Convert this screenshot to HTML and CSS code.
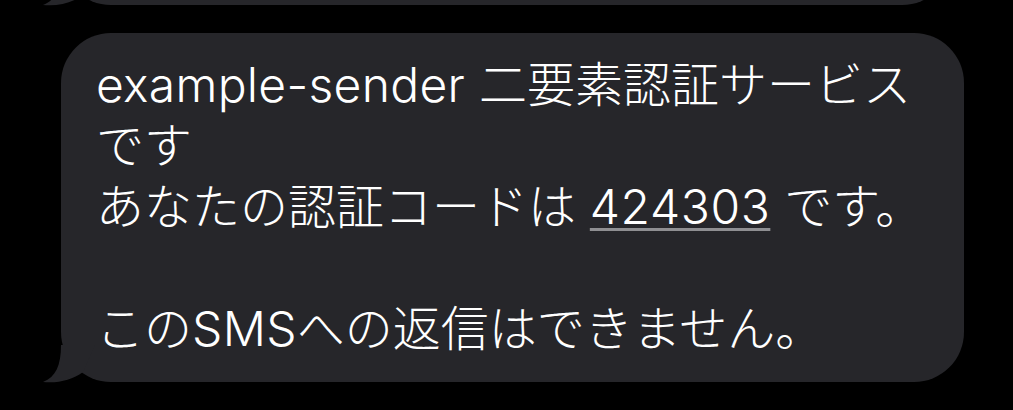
FILE: index.html
```html
<!DOCTYPE html>
<html lang="ja">
<head>
<meta charset="utf-8">
<link rel="stylesheet" href="styles.css">
</head>
<body>
<div class="thread">
  <div class="bubble bubble-prev">
    <svg class="tail" viewBox="0 0 60 47" width="60" height="47" aria-hidden="true"><path d="M20,8 C20,28 15,40 2,45 C17,46.5 31,43 42,35 L54,8 Z"/></svg>
  </div>
  <div class="bubble bubble-main">
    <p class="msg">example-sender <span class="ja">二要素認証サービス</span><br><span class="ja">です</span><br><span class="ja">あなたの認証コードは</span> <span class="code">424303</span> <span class="ja">です。</span><br><br><span class="ja">この</span>SMS<span class="ja">への返信はできません。</span></p>
    <svg class="tail" viewBox="0 0 60 47" width="60" height="47" aria-hidden="true"><path d="M20,8 C20,28 15,40 2,45 C17,46.5 31,43 42,35 L54,8 Z"/></svg>
  </div>
</div>
</body>
</html>
```
FILE: styles.css
```css
html, body {
  margin: 0;
  padding: 0;
  background: #000;
  width: 1013px;
  height: 410px;
  overflow: hidden;
}

.thread {
  display: flex;
  flex-direction: column;
  align-items: flex-start;
  gap: 28px;
  padding-left: 61px;
}

.bubble {
  position: relative;
  background: #26262a;
  border-radius: 50px;
  box-sizing: border-box;
}

.bubble-prev {
  width: 891px;
  height: 100px;
  margin-top: -95px;
}

.bubble-main {
  width: 903px;
  padding: 21px 20px 23px 35px;
}

.msg {
  margin: 0;
  color: #fff;
  font-family: Inter, "Noto Sans CJK JP", sans-serif;
  font-size: 48px;
  font-weight: 350;
  letter-spacing: 0.3px;
  line-height: 61px;
  white-space: nowrap;
}

.ja {
  font-weight: 300;
  letter-spacing: 0;
}

.code {
  letter-spacing: 0.6px;
  text-decoration: underline;
  text-decoration-color: #8f8f92;
  text-decoration-thickness: 3px;
  text-underline-offset: 4px;
}

.tail {
  position: absolute;
  left: -20px;
  bottom: -2px;
  fill: #26262a;
}
```
